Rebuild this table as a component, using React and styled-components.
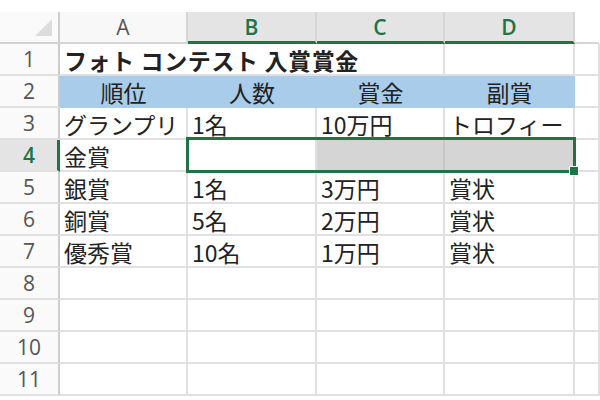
import React from "react";
import styled, { createGlobalStyle } from "styled-components";

const GREEN = "#217346";
const GRID = "#e0e0e0";
const JP = `"Noto Sans CJK JP", "Noto Sans", sans-serif`;
const BLUE = "#a8cce9";
const SEL = "#d5d5d5";

const Global = createGlobalStyle`
  html, body { margin: 0; padding: 0; background: #fff; }
  body { font-family: ${JP}; overflow: hidden; }
`;

const Page = styled.div`
  width: 600px;
  height: 400px;
  padding-top: 12px;
  box-sizing: border-box;
  overflow: hidden;
`;

const Sheet = styled.div`
  display: grid;
  grid-template-columns: 60px 128px 129px 128px 130px 25px;
  grid-auto-rows: 32px;
`;

const placed = (p) => `
  grid-row: ${p.$row};
  grid-column: ${p.$col} / span ${p.$span || 1};
`;

const Corner = styled.div`
  ${placed}
  position: relative;
  background: #fafafa;
  border-right: 2px solid #cdcdcd;
  border-bottom: 2px solid #d2d2d2;
  box-sizing: border-box;
  &::after {
    content: "";
    position: absolute;
    right: 6px;
    bottom: 6px;
    width: 0;
    height: 0;
    border-left: 17px solid transparent;
    border-bottom: 17px solid #dcdcdc;
  }
`;

const ColHeader = styled.div`
  ${placed}
  display: flex;
  align-items: center;
  justify-content: center;
  box-sizing: border-box;
  font-family: "Open Sans", "Liberation Sans", sans-serif;
  font-size: 21px;
  font-weight: ${(p) => (p.$selected ? 600 : 400)};
  color: ${(p) => (p.$selected ? GREEN : "#555")};
  background: ${(p) => (p.$blank ? "#fff" : p.$selected ? "#e4e4e4" : "#f8f8f8")};
  border-right: 2px solid ${(p) => (p.$blank ? "#fff" : "#d6d6d6")};
  border-bottom: ${(p) => (p.$selected ? `3px solid ${GREEN}` : "2px solid #d6d6d6")};
  padding-top: ${(p) => (p.$selected ? "1px" : "0")};
`;

const RowHeader = styled.div`
  ${placed}
  display: flex;
  align-items: center;
  justify-content: center;
  box-sizing: border-box;
  font-family: "Open Sans", "Liberation Sans", sans-serif;
  font-size: 21px;
  font-weight: ${(p) => (p.$selected ? 600 : 400)};
  color: ${(p) => (p.$selected ? GREEN : "#555")};
  background: ${(p) => (p.$selected ? "#e4e4e4" : "#fafafa")};
  border-right: ${(p) => (p.$selected ? `3px solid ${GREEN}` : "2px solid #cdcdcd")};
  border-bottom: 2px solid ${GRID};
  padding-left: ${(p) => (p.$selected ? "1px" : "0")};
`;

const Cell = styled.div`
  ${placed}
  display: flex;
  align-items: flex-end;
  justify-content: ${(p) => (p.$center ? "center" : "flex-start")};
  box-sizing: border-box;
  padding: 0 3px 0 4px;
  font-size: 23px;
  line-height: 28px;
  font-weight: ${(p) => (p.$bold ? 700 : 400)};
  letter-spacing: ${(p) => (p.$bold ? "0.6px" : "0")};
  color: #222;
  white-space: nowrap;
  background: ${(p) => p.$fill || "#fff"};
  border-right: 2px solid ${(p) => (p.$fill === BLUE ? BLUE : p.$fill ? "#c6c6c6" : GRID)};
  border-bottom: 2px solid ${(p) => (p.$fill === BLUE ? BLUE : GRID)};
`;

const Selection = styled.div`
  grid-row: 5;
  grid-column: 3 / span 3;
  position: relative;
  z-index: 2;
  margin: -3px -1px -1px -2px;
  border: 3px solid ${GREEN};
  pointer-events: none;
`;

const FillHandle = styled.div`
  position: absolute;
  right: -6px;
  bottom: -6px;
  width: 8px;
  height: 8px;
  background: ${GREEN};
  border: 1px solid #fff;
`;

const rows = [
  null,
  ["順位", "人数", "賞金", "副賞"],
  ["グランプリ", "1名", "10万円", "トロフィー"],
  ["金賞", "", "", ""],
  ["銀賞", "1名", "3万円", "賞状"],
  ["銅賞", "5名", "2万円", "賞状"],
  ["優秀賞", "10名", "1万円", "賞状"],
  ["", "", "", ""],
  ["", "", "", ""],
  ["", "", "", ""],
  ["", "", "", ""],
];

export default function App() {
  return (
    <Page>
      <Global />
      <Sheet>
        <Corner $row={1} $col={1} />
        {["A", "B", "C", "D"].map((l, j) => (
          <ColHeader key={l} $row={1} $col={j + 2} $selected={j > 0}>
            {l}
          </ColHeader>
        ))}
        <ColHeader $row={1} $col={6} $blank />
        {rows.map((r, i) => {
          const n = i + 1;
          const gr = n + 1;
          if (i === 0) {
            return (
              <React.Fragment key={n}>
                <RowHeader $row={gr} $col={1}>{n}</RowHeader>
                <Cell $row={gr} $col={2} $span={3} $bold>
                  フォト コンテスト 入賞賞金
                </Cell>
                <Cell $row={gr} $col={5} />
                <Cell $row={gr} $col={6} />
              </React.Fragment>
            );
          }
          const isHead = n === 2;
          return (
            <React.Fragment key={n}>
              <RowHeader $row={gr} $col={1} $selected={n === 4}>
                {n}
              </RowHeader>
              {r.map((t, j) => (
                <Cell
                  key={j}
                  $row={gr}
                  $col={j + 2}
                  $center={isHead}
                  $fill={isHead ? BLUE : n === 4 && j >= 2 ? SEL : undefined}
                >
                  {t}
                </Cell>
              ))}
              <Cell $row={gr} $col={6} />
            </React.Fragment>
          );
        })}
        <Selection>
          <FillHandle />
        </Selection>
      </Sheet>
    </Page>
  );
}
